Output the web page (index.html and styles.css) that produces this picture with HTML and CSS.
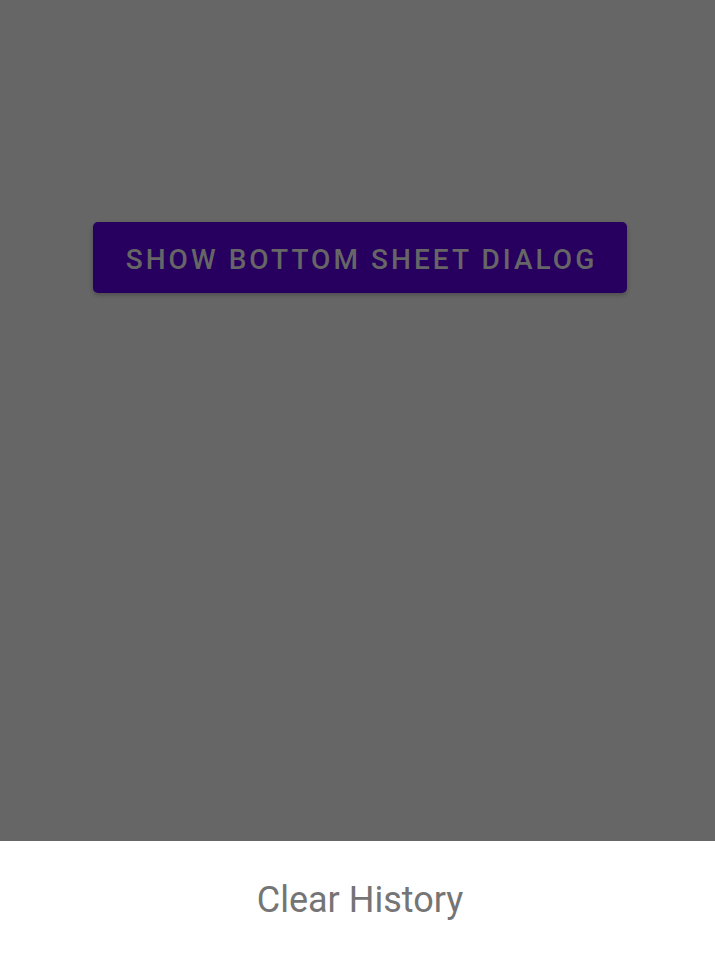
FILE: index.html
```html
<!DOCTYPE html>
<html>
<head>
<meta charset="utf-8">
<link rel="stylesheet" href="styles.css">
</head>
<body>
<div class="screen">
  <main class="content">
    <button class="primary-btn">SHOW BOTTOM SHEET DIALOG</button>
  </main>
  <section class="sheet">
    <div class="sheet-item">Clear History</div>
  </section>
</div>
</body>
</html>
```
FILE: styles.css
```css
html, body {
  margin: 0;
  padding: 0;
}
body {
  width: 715px;
  height: 953px;
  overflow: hidden;
  font-family: Roboto, "Noto Sans", sans-serif;
}
.screen {
  display: flex;
  flex-direction: column;
  height: 953px;
}
.content {
  height: 841px;
  background: #666666;
  display: flex;
  flex-direction: column;
  align-items: center;
  padding-top: 222px;
  padding-left: 5px;
  box-sizing: border-box;
}
.primary-btn {
  width: 534px;
  height: 71px;
  border: none;
  border-radius: 5px;
  background: #27005f;
  color: #666666;
  font-family: Roboto, sans-serif;
  font-weight: 500;
  font-size: 28px;
  letter-spacing: 3.05px;
  padding: 4px 0 0 3px;
  box-shadow: 0 2px 4px rgba(0,0,0,0.25);
}
.sheet {
  flex: 1;
  background: #ffffff;
  display: flex;
  justify-content: center;
  padding-left: 5px;
}
.sheet-item {
  margin-top: 37px;
  font-size: 36px;
  line-height: 44px;
  color: #757575;
}
```
